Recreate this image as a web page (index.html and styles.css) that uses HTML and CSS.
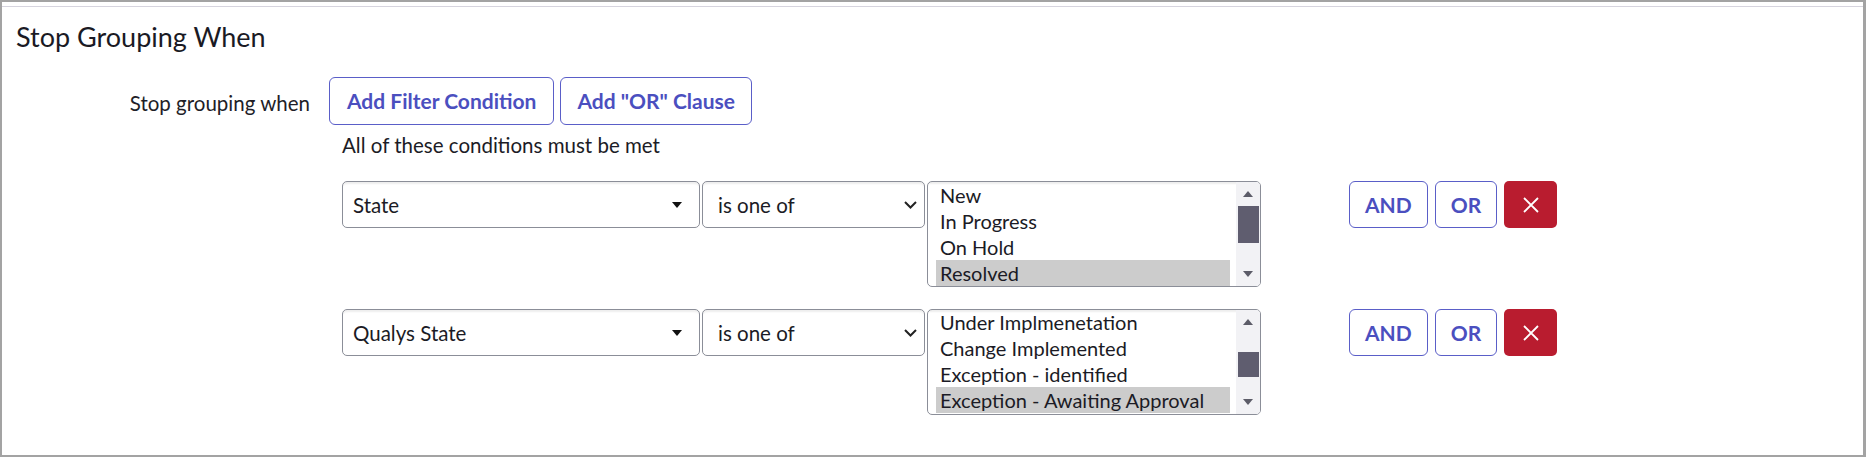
FILE: index.html
```html
<!DOCTYPE html>
<html lang="en">
<head>
<meta charset="utf-8">
<title>Stop Grouping When</title>
<link rel="stylesheet" href="styles.css">
</head>
<body>
<div class="frame">
  <section class="section">
    <h2 class="title">Stop Grouping When</h2>
    <div class="form-row">
      <div class="label">Stop grouping when</div>
      <div class="controls">
        <div class="btn-group">
          <button class="btn">Add Filter Condition</button>
          <button class="btn btn-or">Add "OR" Clause</button>
        </div>
        <div class="hint">All of these conditions must be met</div>

        <div class="cond">
          <div class="sel sel-field">
            <span>State</span>
            <svg class="caret" width="10" height="6" viewBox="0 0 10 6"><path d="M0 0H10L5 6Z" fill="#111"/></svg>
          </div>
          <div class="sel sel-op">
            <span>is one of</span>
            <svg class="chev" width="13" height="8" viewBox="0 0 13 8"><path d="M1 1L6.5 6.5L12 1" fill="none" stroke="#222" stroke-width="2"/></svg>
          </div>
          <div class="listbox">
            <div class="opts">
              <div class="opt">New</div>
              <div class="opt">In Progress</div>
              <div class="opt">On Hold</div>
              <div class="opt selected">Resolved</div>
            </div>
            <div class="scrollbar">
              <div class="arrow"><svg width="10" height="6" viewBox="0 0 10 6"><path d="M0 6H10L5 0Z" fill="#5c5c68"/></svg></div>
              <div class="track"><div class="thumb" style="margin-top:0px;height:37px"></div></div>
              <div class="arrow"><svg width="10" height="6" viewBox="0 0 10 6"><path d="M0 0H10L5 6Z" fill="#5c5c68"/></svg></div>
            </div>
          </div>
          <div class="actions">
            <button class="btn btn-sm">AND</button>
            <button class="btn btn-sm">OR</button>
            <button class="btn-del" aria-label="Delete"><svg width="16" height="16" viewBox="0 0 16 16"><path d="M1 1L15 15M15 1L1 15" stroke="#fff" stroke-width="1.8" fill="none"/></svg></button>
          </div>
        </div>

        <div class="cond">
          <div class="sel sel-field">
            <span>Qualys State</span>
            <svg class="caret" width="10" height="6" viewBox="0 0 10 6"><path d="M0 0H10L5 6Z" fill="#111"/></svg>
          </div>
          <div class="sel sel-op">
            <span>is one of</span>
            <svg class="chev" width="13" height="8" viewBox="0 0 13 8"><path d="M1 1L6.5 6.5L12 1" fill="none" stroke="#222" stroke-width="2"/></svg>
          </div>
          <div class="listbox">
            <div class="opts opts-scrolled">
              <div class="opt">Under Implmenetation</div>
              <div class="opt">Change Implemented</div>
              <div class="opt">Exception - identified</div>
              <div class="opt selected">Exception - Awaiting Approval</div>
            </div>
            <div class="scrollbar">
              <div class="arrow"><svg width="10" height="6" viewBox="0 0 10 6"><path d="M0 6H10L5 0Z" fill="#5c5c68"/></svg></div>
              <div class="track"><div class="thumb" style="margin-top:18px;height:25px"></div></div>
              <div class="arrow"><svg width="10" height="6" viewBox="0 0 10 6"><path d="M0 0H10L5 6Z" fill="#5c5c68"/></svg></div>
            </div>
          </div>
          <div class="actions">
            <button class="btn btn-sm">AND</button>
            <button class="btn btn-sm">OR</button>
            <button class="btn-del" aria-label="Delete"><svg width="16" height="16" viewBox="0 0 16 16"><path d="M1 1L15 15M15 1L1 15" stroke="#fff" stroke-width="1.8" fill="none"/></svg></button>
          </div>
        </div>
      </div>
    </div>
  </section>
</div>
</body>
</html>
```
FILE: styles.css
```css
* { box-sizing: border-box; }
html, body { margin: 0; padding: 0; background: #fff; }
body {
  font-family: Lato, "Open Sans", "Liberation Sans", sans-serif;
  color: #1c1c26;
  font-size: 20px;
  line-height: 24px;
}
.frame {
  width: 1866px;
  height: 457px;
  border: 2px solid #a3a3a3;
  border-right-width: 3px;
  background: #fff;
}
.section {
  margin-top: 4px;
  border-top: 1px solid #d6d4de;
}
.title {
  margin: 14px 0 0 0;
  padding-left: 14px;
  font-size: 27px;
  line-height: 32px;
  font-weight: 400;
  color: #1a1a24;
}
.form-row {
  display: flex;
  margin-top: 24px;
}
.label {
  width: 308px;
  text-align: right;
  font-size: 20.5px;
  line-height: 48px;
  padding-top: 2px;
  color: #1e1e28;
}
.controls {
  margin-left: 19px;
  display: flex;
  flex-direction: column;
}
.btn-group {
  display: flex;
  gap: 6px;
}
.btn {
  height: 48px;
  padding: 0 17px;
  border: 1px solid #5a5ec8;
  border-radius: 6px;
  background: #fff;
  color: #4b4fbf;
  font-family: inherit;
  font-size: 21px;
  font-weight: 700;
  line-height: 24px;
}
.btn-or { padding: 0 16px; }
.hint {
  margin: 8px 0 0 13px;
  font-size: 20.5px;
}
.cond {
  display: flex;
  align-items: flex-start;
  gap: 2px;
  margin-left: 13px;
  margin-top: 24px;
}
.cond + .cond { margin-top: 22px; }
.sel {
  height: 47px;
  border: 1px solid #8b8e98;
  border-radius: 5px;
  box-shadow: inset 0 4px 2px -2px rgba(0, 0, 0, 0.07);
  display: flex;
  align-items: center;
  justify-content: space-between;
  color: #1b1b25;
  background: #fff;
  font-size: 20.5px;
}
.sel-field { width: 358px; padding: 0 17px 0 10px; }
.sel-op { width: 223px; padding: 0 7px 0 15px; }
.listbox {
  width: 334px;
  height: 106px;
  border: 1px solid #8b8e98;
  border-radius: 5px;
  display: flex;
  overflow: hidden;
  background: #fff;
}
.opts {
  flex: 1;
  padding: 0 6px 0 8px;
  box-shadow: inset 0 4px 2px -2px rgba(0, 0, 0, 0.07);
  overflow: hidden;
}
.opts-scrolled .opt:first-child { margin-top: -1px; }
.opt {
  height: 26px;
  line-height: 26px;
  padding-left: 4px;
  white-space: nowrap;
  color: #1b1b25;
}
.opt.selected { background: #cccccc; }
.scrollbar {
  width: 24px;
  background: #f2f2f5;
  display: flex;
  flex-direction: column;
}
.arrow {
  height: 24px;
  display: flex;
  align-items: center;
  justify-content: center;
}
.track {
  flex: 1;
  padding: 0 1px 0 2px;
}
.thumb {
  background: #5f5d6f;
}
.actions {
  display: flex;
  gap: 7px;
  margin-left: 86px;
}
.btn-sm {
  height: 47px;
  padding: 0 15px;
}
.btn-del {
  width: 53px;
  height: 47px;
  border: none;
  border-radius: 5px;
  background: #b91c2f;
  display: flex;
  align-items: center;
  justify-content: center;
  padding: 0;
}
```
